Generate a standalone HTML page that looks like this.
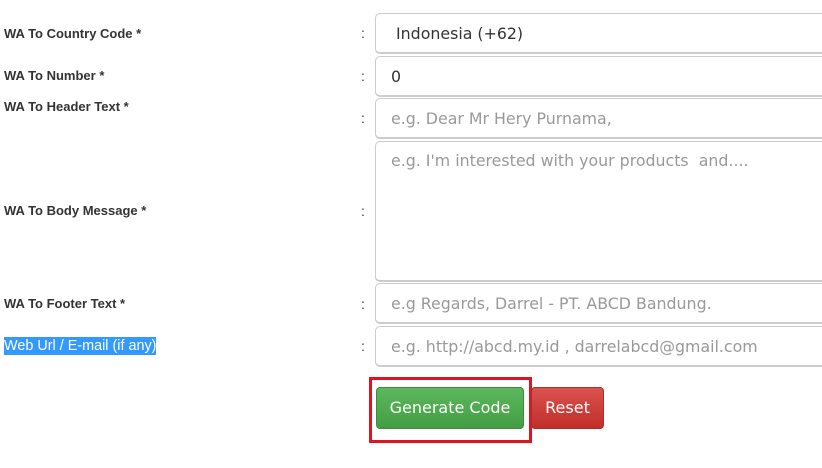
<!DOCTYPE html>
<html><head><meta charset="utf-8"><style>
body{margin:0;width:822px;height:468px;background:#fff;position:relative;overflow:hidden;font-family:"Liberation Sans",sans-serif}
.l{position:absolute;left:4px;font-weight:bold;font-size:13px;color:#333}
.c{position:absolute;left:361px;font-size:14px;color:#333}
.i{position:absolute;left:375px;width:470px;border:1px solid #ccc;border-bottom:2px solid #ccc;border-radius:5px;box-sizing:border-box;font-family:"DejaVu Sans",sans-serif;font-size:15.8px;color:#999;padding-left:15px}
.btn{position:absolute;top:387px;height:42px;border-radius:4px;color:#fff;font-family:"DejaVu Sans",sans-serif;font-size:16px;text-align:center;line-height:40px}
</style></head><body>
<div class="l" style="top:26px">WA To Country Code *</div>
<div class="l" style="top:68px">WA To Number *</div>
<div class="l" style="top:99px">WA To Header Text *</div>
<div class="l" style="top:203px">WA To Body Message *</div>
<div class="l" style="top:296px">WA To Footer Text *</div>
<div class="l" style="background:#3399ff;color:#fff;font-weight:normal;font-size:14.4px;padding:1px 0;top:337px">Web Url / E-mail (if any)</div>
<div class="c" style="top:25px">:</div>
<div class="c" style="top:68px">:</div>
<div class="c" style="top:110px">:</div>
<div class="c" style="top:203px">:</div>
<div class="c" style="top:296px">:</div>
<div class="c" style="top:338px">:</div>
<div class="i" style="top:13px;height:41px;line-height:39px;color:#333;padding-left:20px">Indonesia (+62)</div>
<div class="i" style="top:56px;height:41px;line-height:39px;color:#333">0</div>
<div class="i" style="top:98px;height:41px;line-height:39px">e.g. Dear Mr Hery Purnama,</div>
<div class="i" style="top:141px;height:141px;line-height:38px">e.g. I'm interested with your products&nbsp; and....</div>
<div class="i" style="top:283px;height:41px;line-height:39px">e.g Regards, Darrel - PT. ABCD Bandung.</div>
<div class="i" style="top:326px;height:41px;line-height:39px">e.g. http://abcd.my.id , darrelabcd@gmail.com</div>
<div style="position:absolute;left:369px;top:377px;width:157px;height:60px;border:3px solid #e0141e"></div>
<div class="btn" style="left:376px;width:148px;background:linear-gradient(#5cb85c,#449d44);border:1px solid #3d8b3d;box-sizing:border-box">Generate Code</div>
<div class="btn" style="left:531px;width:73px;background:linear-gradient(#d9534f,#c12e2a);border:1px solid #b52b27;box-sizing:border-box">Reset</div>
</body></html>
